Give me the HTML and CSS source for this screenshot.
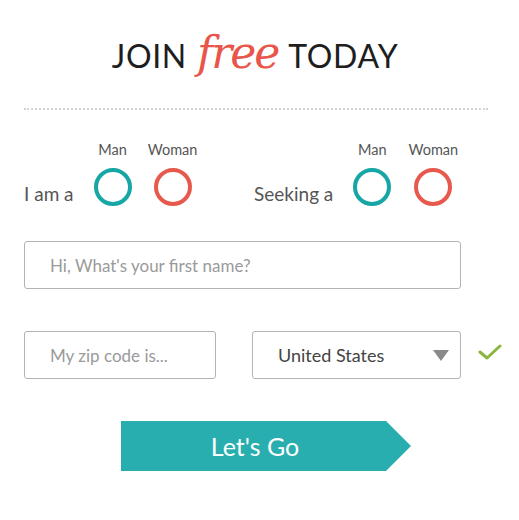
FILE: index.html
```html
<!DOCTYPE html>
<html lang="en">
<head>
  <meta charset="UTF-8" />
  <meta name="viewport" content="width=device-width, initial-scale=1.0"/>
  <title>Join Free Today</title>
  <link rel="stylesheet" href="styles.css">
</head>
<body>
  <div class="signup">
    <h1 class="title">JOIN <span class="free">free</span> TODAY</h1>
    <div class="divider"></div>

    <div class="gender-row">
      <div class="group">
        <span class="group-label">I am a</span>
        <div class="option">
          <span class="option-label">Man</span>
          <span class="ring ring-teal"></span>
        </div>
        <div class="option">
          <span class="option-label">Woman</span>
          <span class="ring ring-red"></span>
        </div>
      </div>
      <div class="group group-seek">
        <span class="group-label">Seeking a</span>
        <div class="option">
          <span class="option-label">Man</span>
          <span class="ring ring-teal"></span>
        </div>
        <div class="option">
          <span class="option-label">Woman</span>
          <span class="ring ring-red"></span>
        </div>
      </div>
    </div>

    <input type="text" class="field field-name" placeholder="Hi, What's your first name?">

    <div class="location-row">
      <input type="text" class="field field-zip" placeholder="My zip code is...">
      <div class="field field-country">
        <span>United States</span>
        <span class="caret"></span>
      </div>
      <svg class="check" width="24" height="20" viewBox="0 0 24 20">
        <path d="M2 10 L9 16 L22 4" fill="none" stroke="#8db43f" stroke-width="3" stroke-linecap="round" stroke-linejoin="round"/>
      </svg>
    </div>

    <div class="submit-row">
      <button class="go">Let's Go</button>
    </div>
  </div>
</body>
</html>
```

FILE: styles.css
```css
body {
  margin: 0;
  background: #fff;
  font-family: Lato, "Open Sans", sans-serif;
  color: #444;
}
.signup {
  width: 464px;
  padding: 0 24px;
}
.title {
  margin: 0;
  height: 108px;
  box-sizing: border-box;
  padding-top: 33px;
  text-align: center;
  font-family: Lato, sans-serif;
  font-weight: 400;
  font-size: 32px;
  letter-spacing: 0.7px;
  color: #1e1e1e;
  line-height: 40px;
  padding-right: 2px;
}
.free {
  font-family: "DejaVu Serif", serif;
  font-style: italic;
  font-size: 44px;
  color: #e8554a;
  letter-spacing: -2px;
  margin: 0 2px 0 1px;
}
.divider {
  border-top: 2px dotted #d4d4d4;
  width: 464px;
}
.gender-row {
  display: flex;
  margin-top: 31px;
}
.group {
  display: flex;
  align-items: flex-end;
  width: 230px;
}
.group-label {
  font-size: 19px;
  color: #555;
  margin-right: 12px;
  padding-bottom: 1px;
}
.option {
  display: flex;
  flex-direction: column;
  align-items: center;
  width: 54px;
  margin-right: 6px;
}
.group-seek .option {
  margin-right: 7px;
}
.option-label {
  font-size: 14.5px;
  color: #555;
  margin-bottom: 10px;
}
.ring {
  display: block;
  width: 30px;
  height: 30px;
  border-radius: 50%;
  border: 4px solid;
}
.ring-teal {
  border-color: #15a6a5;
}
.ring-red {
  border-color: #e8594d;
}
.field {
  box-sizing: border-box;
  height: 48px;
  border: 1px solid #b3b3b3;
  border-radius: 3px;
  padding: 0 25px;
  font-family: Lato, sans-serif;
  font-size: 17px;
  color: #444;
  background: #fff;
  flex-shrink: 0;
}
.field::placeholder {
  color: #9a9a9a;
}
.field-name {
  display: block;
  width: 437px;
  margin-top: 35px;
}
.location-row {
  display: flex;
  align-items: center;
  margin-top: 42px;
}
.field-zip {
  width: 192px;
}
.field-country {
  width: 209px;
  margin-left: 36px;
  display: flex;
  align-items: center;
  justify-content: space-between;
  font-size: 18px;
  padding-right: 11px;
}
.caret {
  width: 0;
  height: 0;
  border-left: 8px solid transparent;
  border-right: 8px solid transparent;
  border-top: 11px solid #8a8a8a;
}
.check {
  flex-shrink: 0;
  margin-left: 17px;
  margin-top: -6px;
}
.submit-row {
  margin-top: 42px;
  padding-left: 97px;
}
.go {
  width: 290px;
  height: 50px;
  border: none;
  background: #28aeae;
  color: #fff;
  font-family: Lato, sans-serif;
  font-size: 25px;
  padding: 0 22px 0 0;
  clip-path: polygon(0 0, 265px 0, 100% 50%, 265px 100%, 0 100%);
}
```
